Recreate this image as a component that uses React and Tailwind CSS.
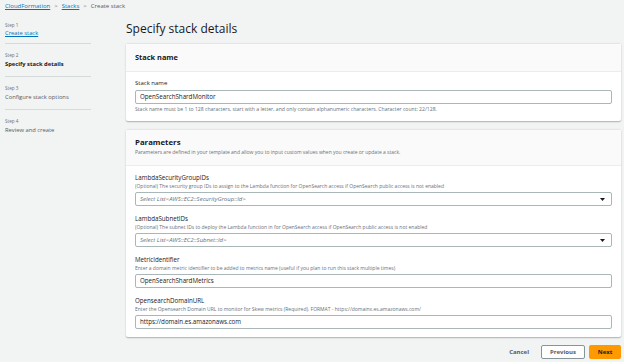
const FONT = { fontFamily: '"Open Sans", "Noto Sans", Arial, sans-serif' }

const steps = [
  { step: 'Step 1', title: 'Create stack', state: 'link' },
  { step: 'Step 2', title: 'Specify stack details', state: 'current' },
  { step: 'Step 3', title: 'Configure stack options', state: 'todo' },
  { step: 'Step 4', title: 'Review and create', state: 'todo' },
]

const params = [
  {
    label: 'LambdaSecurityGroupIDs',
    desc: '(Optional) The security group IDs to assign to the Lambda function for OpenSearch access if OpenSearch public access is not enabled',
    select: 'Select List<AWS::EC2::SecurityGroup::Id>',
  },
  {
    label: 'LambdaSubnetIDs',
    desc: '(Optional) The subnet IDs to deploy the Lambda function in for OpenSearch access if OpenSearch public access is not enabled',
    select: 'Select List<AWS::EC2::Subnet::Id>',
  },
  {
    label: 'MetricIdentifier',
    desc: 'Enter a domain metric identifier to be added to metrics name (useful if you plan to run this stack multiple times)',
    value: 'OpenSearchShardMetrics',
  },
  {
    label: 'OpensearchDomainURL',
    desc: 'Enter the Opensearch Domain URL to monitor for Skew metrics (Required). FORMAT - https://domainx.es.amazonaws.com/',
    value: 'https://domain.es.amazonaws.com',
  },
]

function Caret() {
  return (
    <svg width="5" height="3" viewBox="0 0 5 3" className="shrink-0">
      <path d="M0 0h5L2.5 3z" fill="#16191f" />
    </svg>
  )
}

function Field({ label, desc, value, select }) {
  return (
    <div className="flex h-[32px] flex-col">
      <div className="h-[8px] text-[6.2px] leading-[8px] text-[#16191f]">{label}</div>
      <div className="mt-[1px] h-[6px] truncate text-[5px] leading-[6px] text-[#687078]">{desc}</div>
      <div className="mt-[3px] flex h-[14px] items-center justify-between rounded-[2px] border border-[#aab7b8] bg-white pl-[4px] pr-[6px]">
        {select ? (
          <>
            <span className="text-[6px] italic text-[#687078]">{select}</span>
            <Caret />
          </>
        ) : (
          <span className="text-[6.2px] text-[#16191f]">{value}</span>
        )}
      </div>
    </div>
  )
}

export default function App() {
  return (
    <div style={FONT} className="flex h-[362px] w-[624px] flex-col overflow-hidden bg-[#f2f3f3]">
      <div className="flex h-[12px] items-center gap-[4px] px-[5px] text-[6px] leading-[8px]">
        <span className="text-[#0073bb] underline">CloudFormation</span>
        <span className="text-[#687078]">&gt;</span>
        <span className="text-[#0073bb] underline">Stacks</span>
        <span className="text-[#687078]">&gt;</span>
        <span className="text-[#545b64]">Create stack</span>
      </div>

      <div className="flex">
        <nav className="ml-[5px] w-[86px]">
          {steps.map((s, i) => (
            <div
              key={s.step}
              className={
                (i === 0 ? 'h-[32px] pt-[10px]' : 'h-[33px] pt-[8px]') +
                (i < steps.length - 1 ? ' border-b border-[#d5dbdb]' : '')
              }
            >
              <div className={(i === 0 ? 'h-[6px] leading-[6px]' : 'h-[7px] leading-[7px]') + ' text-[4.6px] text-[#687078]'}>
                {s.step}
              </div>
              <div
                className={
                  'mt-[1px] h-[9px] text-[5.8px] leading-[9px] ' +
                  (s.state === 'link'
                    ? 'text-[#0073bb] underline'
                    : s.state === 'current'
                      ? 'font-bold text-[#16191f]'
                      : 'text-[#545b64]')
                }
              >
                {s.title}
              </div>
            </div>
          ))}
        </nav>

        <main className="ml-[35px] w-[495px]">
          <div className="flex h-[32px] items-center pt-[1px] text-[12px] text-[#16191f]">Specify stack details</div>

          <section className="h-[77px] rounded-[2px] bg-white shadow-[0_0.5px_1.5px_rgba(0,28,36,0.3)]">
            <div className="flex h-[28px] items-center border-b border-[#eaeded] bg-[#fafafa] px-[9px] text-[7.4px] font-bold text-[#16191f]">
              Stack name
            </div>
            <div className="px-[9px] pt-[7px]">
              <div className="h-[8px] text-[6px] leading-[8px] text-[#16191f]">Stack name</div>
              <div className="mt-[3px] flex h-[14px] items-center rounded-[2px] border border-[#aab7b8] px-[4px] text-[6.2px] text-[#16191f]">
                OpenSearchShardMonitor
              </div>
              <div className="mt-[2px] h-[6px] text-[5.1px] leading-[6px] text-[#687078]">
                Stack name must be 1 to 128 characters, start with a letter, and only contain alphanumeric characters. Character count: 22/128.
              </div>
            </div>
          </section>

          <section className="mt-[9px] h-[207px] rounded-[2px] bg-white shadow-[0_0.5px_1.5px_rgba(0,28,36,0.3)]">
            <div className="h-[36px] border-b border-[#eaeded] bg-[#fafafa] px-[9px] pt-[7px]">
              <div className="h-[10px] text-[7.8px] font-bold leading-[10px] text-[#16191f]">Parameters</div>
              <div className="mt-[2px] h-[6px] text-[5px] leading-[6px] text-[#687078]">
                Parameters are defined in your template and allow you to input custom values when you create or update a stack.
              </div>
            </div>
            <div className="flex flex-col gap-[9px] px-[9px] pt-[8px]">
              {params.map((p) => (
                <Field key={p.label} {...p} />
              ))}
            </div>
          </section>

          <div className="mt-[8px] flex items-center justify-end">
            <span className="mr-[12px] text-[6px] font-bold text-[#545b64]">Cancel</span>
            <span className="flex h-[14px] w-[44px] items-center justify-center rounded-[2px] border border-[#879596] bg-white text-[6px] font-bold text-[#545b64]">
              Previous
            </span>
            <span className="ml-[4px] flex h-[14px] w-[32px] items-center justify-center rounded-[2px] bg-[#ff9900] text-[6px] font-bold text-[#16191f]">
              Next
            </span>
          </div>
        </main>
      </div>
    </div>
  )
}
